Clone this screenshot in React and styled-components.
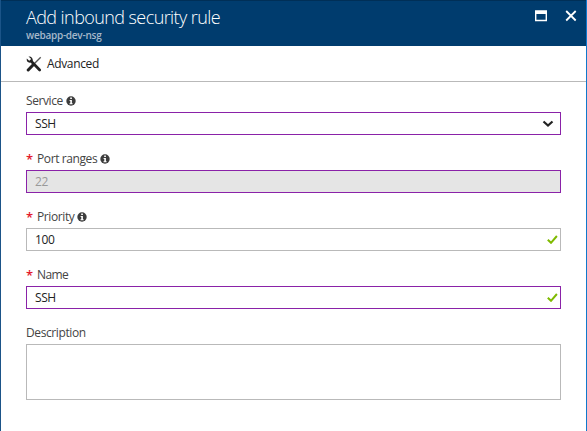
import React from 'react';
import styled, { createGlobalStyle } from 'styled-components';

const GlobalStyle = createGlobalStyle`
  * { box-sizing: border-box; }
  body { margin: 0; background: #fff; font-family: "Open Sans", "Noto Sans", sans-serif; }
`;

const Blade = styled.main`
  width: 587px;
  height: 431px;
  display: flex;
  flex-direction: column;
  overflow: hidden;
  background: #fff;
  border-left: 1px solid #1b5488;
  border-right: 1px solid #0f78cc;
`;

const Header = styled.header`
  height: 46px;
  flex: none;
  display: flex;
  justify-content: space-between;
  padding: 4px 8px 0 25px;
  background: #003c6e;
  border-top: 1px solid #002f57;
`;

const Title = styled.h1`
  margin: 0;
  font-size: 18px;
  line-height: 24px;
  font-weight: 300;
  letter-spacing: -0.58px;
  color: #fff;
  white-space: nowrap;
`;

const Subtitle = styled.div`
  font-size: 10px;
  line-height: 13px;
  font-weight: 600;
  letter-spacing: -0.25px;
  color: #a5b8ca;
`;

const WindowActions = styled.div`
  display: flex;
  gap: 17px;
  padding-top: 5px;
`;

const IconButton = styled.button`
  display: flex;
  align-items: flex-start;
  height: 13px;
  padding: 0;
  border: 0;
  background: none;
`;

const Toolbar = styled.div`
  height: 36px;
  flex: none;
  display: flex;
  align-items: center;
  gap: 5px;
  padding-left: 25px;
  border-bottom: 1px solid #b9b9b9;
`;

const Command = styled.span`
  font-size: 12px;
  line-height: 16px;
  letter-spacing: -0.35px;
  color: #222;
`;

const Form = styled.form`
  display: flex;
  flex-direction: column;
  gap: 9px;
  padding: 12px 25px 0;
`;

const Field = styled.div`
  display: flex;
  flex-direction: column;
  gap: 4px;
`;

const Label = styled.div`
  height: 14px;
  display: flex;
  align-items: center;
  gap: 3px;
  font-size: 12px;
  line-height: 14px;
  color: #444;
`;

const LabelText = styled.span`
  letter-spacing: ${(p) => p.$tracking || -0.4}px;
  white-space: nowrap;
`;

const Required = styled.span`
  width: 8px;
  color: #e3192d;
  font-size: 13px;
  font-weight: 600;
`;

const Control = styled.div`
  height: ${(p) => p.$height || 23}px;
  margin-bottom: 8px;
  display: flex;
  align-items: center;
  justify-content: space-between;
  padding: 0 2px 0 8px;
  border: 1px solid ${(p) => (p.$edited ? '#8a22a8' : '#b9b9b9')};
  background: ${(p) => (p.$disabled ? '#e5e5e5' : '#fff')};
  color: ${(p) => (p.$disabled ? '#999' : '#222')};
  font-size: 12px;
  line-height: 16px;
`;

const Value = styled.span`
  letter-spacing: -0.4px;
`;

const Chevron = styled.svg`
  margin-right: 4px;
`;

const InfoIcon = () => (
  <svg width="10" height="10" viewBox="0 0 10 10">
    <circle cx="5" cy="5" r="4.7" fill="#3c3c3c" />
    <path d="M4.2 1.6h1.7v1.5H4.2zM3.6 4h2.3v3.2h.7v1H3.5v-1h.8V5h-.7z" fill="#fff" />
  </svg>
);

const CheckIcon = () => (
  <svg width="11" height="9" viewBox="0 0 11 9">
    <path d="M.8 4.8 4 7.8 9.9 1" fill="none" stroke="#7fba00" strokeWidth="2" />
  </svg>
);

const ToolsIcon = () => (
  <svg width="16" height="16" viewBox="0 0 16 16">
    <path d="M14.7 1.2 8 8" stroke="#555" strokeWidth="1.3" />
    <path d="M7 9 2.2 14" stroke="#222" strokeWidth="3" strokeLinecap="round" />
    <path d="M5 5 13.7 14" stroke="#222" strokeWidth="2.7" strokeLinecap="round" />
    <path d="M2.5.6 5 2.8 4.6 4.2 3.2 4.7.8 2.5C.2 4.7 1.6 6.8 4 6.7L6.8 4.7C7 2.2 5 .1 2.5.6Z" fill="#222" />
  </svg>
);

const fields = [
  { label: 'Service', value: 'SSH', info: true, edited: true, select: true },
  { label: 'Port ranges', value: '22', info: true, required: true, edited: true, disabled: true },
  { label: 'Priority', value: '100', info: true, required: true, valid: true },
  { label: 'Name', value: 'SSH', required: true, edited: true, valid: true, tracking: -0.6 },
  { label: 'Description', height: 56 },
];

export default function App() {
  return (
    <Blade>
      <GlobalStyle />
      <Header>
        <div>
          <Title>Add inbound security rule</Title>
          <Subtitle>webapp-dev-nsg</Subtitle>
        </div>
        <WindowActions>
          <IconButton aria-label="Maximize">
            <svg width="13" height="12" viewBox="0 0 13 12">
              <path d="M0 .3h12v10.9H0zM1.4 4v5.8h9.2V4z" fill="#fff" fillRule="evenodd" />
            </svg>
          </IconButton>
          <IconButton aria-label="Close">
            <svg width="13" height="12" viewBox="0 0 13 12">
              <path d="m1.2 1 9.5 9.5m0-9.5-9.500 9.500" stroke="#fff" strokeWidth="1.8" />
            </svg>
          </IconButton>
        </WindowActions>
      </Header>
      <Toolbar>
        <ToolsIcon />
        <Command>Advanced</Command>
      </Toolbar>
      <Form>
        {fields.map((f) => (
          <Field key={f.label}>
            <Label>
              {f.required && <Required>*</Required>}
              <LabelText $tracking={f.tracking}>{f.label}</LabelText>
              {f.info && <InfoIcon />}
            </Label>
            <Control $height={f.height} $edited={f.edited} $disabled={f.disabled}>
              <Value>{f.value}</Value>
              {f.select && (
                <Chevron width="12" height="8" viewBox="0 0 12 8">
                  <path d="m1.5 1.5 4.5 4 4.5-4" fill="none" stroke="#222" strokeWidth="2.2" />
                </Chevron>
              )}
              {f.valid && <CheckIcon />}
            </Control>
          </Field>
        ))}
      </Form>
    </Blade>
  );
}
